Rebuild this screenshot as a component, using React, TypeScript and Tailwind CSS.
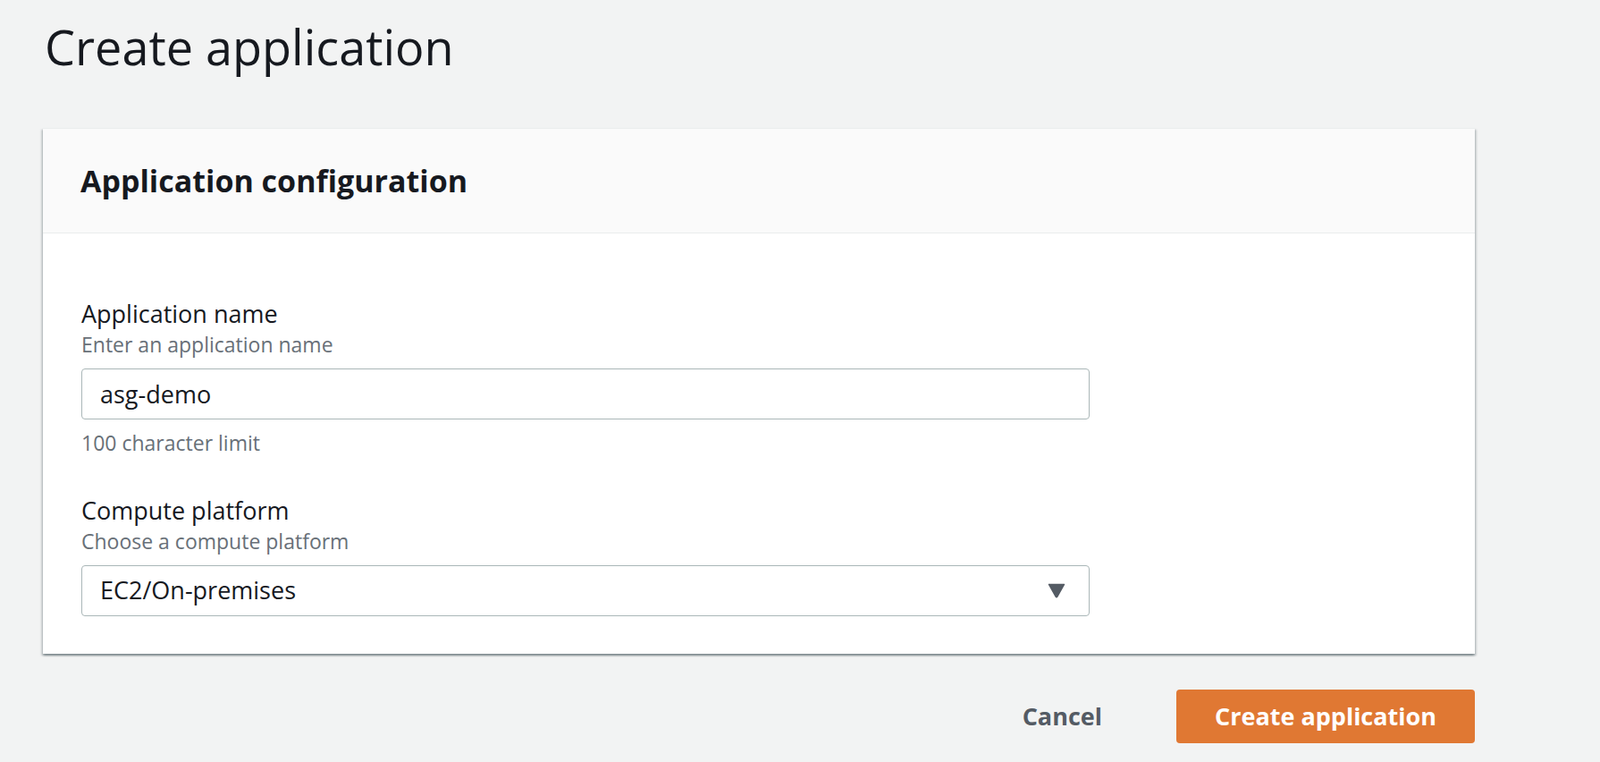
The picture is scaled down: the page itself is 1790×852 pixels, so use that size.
import { useState } from "react";

const font = "font-['Open_Sans','Noto_Sans',sans-serif]";

function FieldLabel({ label, description }: { label: string; description: string }) {
  return (
    <div className="mb-[12px]">
      <div className="text-[27px] leading-[38px] text-[#16191f]">{label}</div>
      <div className="text-[23px] leading-[30px] text-[#687078]">{description}</div>
    </div>
  );
}

export default function App() {
  const [name, setName] = useState("asg-demo");

  return (
    <div className={`${font} min-h-screen bg-[#f2f3f3] pl-[48px] pt-[20px]`}>
      <div className="w-[1602px]">
        <h1 className="text-[54px] leading-[64px] font-normal text-[#16191f] pl-[2px]">
          Create application
        </h1>

        {/* Container */}
        <div className="mt-[59px] bg-white border-t border-[#eaeded] shadow-[0_2px_2px_0_rgba(0,28,36,0.3),2px_2px_2px_0_rgba(0,28,36,0.15),-2px_2px_2px_0_rgba(0,28,36,0.15)]">
          <div className="bg-[#fafafa] border-b border-[#eaeded] pl-[42px] pt-[36px] pb-[36px]">
            <h2 className="text-[34px] leading-[44px] font-bold text-[#16191f]">
              Application configuration
            </h2>
          </div>

          <div className="pl-[43px] pt-[71px] pb-[42px]">
            <FieldLabel label="Application name" description="Enter an application name" />
            <input
              value={name}
              onChange={(e) => setName(e.target.value)}
              className="block w-[1128px] h-[57px] px-[20px] border border-[#aab7b8] rounded-[4px] bg-white text-[27px] text-[#16191f] outline-none"
            />
            <div className="mt-[11px] text-[23px] leading-[30px] text-[#687078]">
              100 character limit
            </div>

            <div className="mt-[42px]">
              <FieldLabel label="Compute platform" description="Choose a compute platform" />
              <button
                type="button"
                className="flex items-center justify-between w-[1128px] h-[57px] pl-[20px] pr-[26px] border border-[#aab7b8] rounded-[4px] bg-white text-[27px] text-[#16191f] text-left"
              >
                <span>EC2/On-premises</span>
                <svg width="20" height="17" viewBox="0 0 20 17">
                  <path
                    d="M1.5 1.5 H18.5 L10.8 15.2 Q10 16.4 9.2 15.2 Z"
                    fill="#545b64"
                    stroke="#545b64"
                    strokeWidth="1.5"
                    strokeLinejoin="round"
                  />
                </svg>
              </button>
            </div>
          </div>
        </div>

        {/* Actions */}
        <div className="mt-[40px] flex justify-end items-center">
          <button
            type="button"
            className="h-[60px] px-[40px] text-[27px] font-bold text-[#545b64] mr-[43px]"
          >
            Cancel
          </button>
          <button
            type="button"
            className="h-[60px] w-[334px] rounded-[4px] bg-[#e07833] text-[27px] font-bold text-white"
          >
            Create application
          </button>
        </div>
      </div>
    </div>
  );
}
